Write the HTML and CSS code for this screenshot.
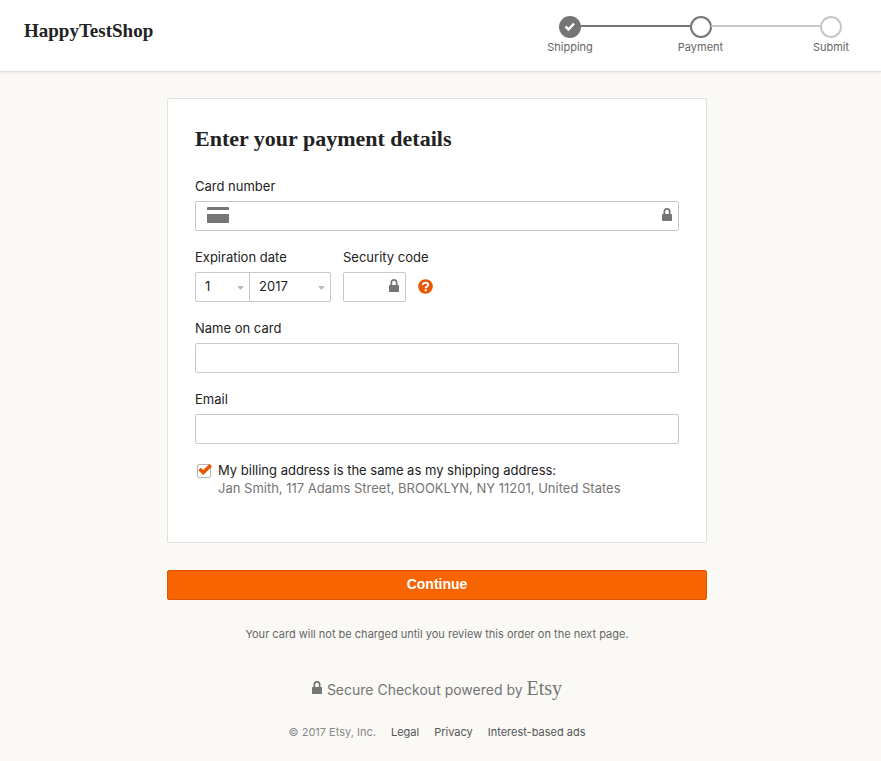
FILE: index.html
```html
<!DOCTYPE html>
<html lang="en">
    <head>
        <meta charset="utf-8">
        <meta name="viewport" content="width=device-width, initial-scale=1">
        <title>HappyTestShop - Payment</title>
        <link rel="stylesheet" href="styles.css">
    </head>
    <body>
        <svg class="symbols" width="0" height="0" aria-hidden="true">
            <symbol id="lock" viewBox="0 0 10 13">
                <path fill="currentColor" fill-rule="evenodd" d="M1.500 6V3.500a3.500 3.500 0 0 1 7 0V6h.8q.7 0 .7.7v5.6q0 .7-.7.7H.7Q0 13 0 12.300V6.700Q0 6 .7 6zM3.200 6h3.600V3.500a1.800 1.800 0 0 0-3.600 0z"/>
            </symbol>
        </svg>
        <header class="header">
            <div class="shop-name">HappyTestShop</div>
            <ol class="steps">
                <li class="step done">
                    <span class="dot"><svg width="12" height="10" viewBox="0 0 12 10"><path d="M1.500 4.500l3 3 5.500-6" fill="none" stroke="#fff" stroke-width="2.500"/></svg></span>
                    <span class="step-label">Shipping</span>
                </li>
                <li class="step current" aria-current="step">
                    <span class="dot"></span>
                    <span class="step-label">Payment</span>
                </li>
                <li class="step">
                    <span class="dot"></span>
                    <span class="step-label">Submit</span>
                </li>
            </ol>
        </header>
        <main class="content">
            <form>
                <section class="card">
                    <h1>Enter your payment details</h1>
                    <div class="field">
                        <label for="number">Card number</label>
                        <div class="input-wrap">
                            <svg class="card-icon" width="22" height="16" viewBox="0 0 22 16" aria-hidden="true"><path fill="currentColor" d="M0 3V1q0-1 1-1h20q1 0 1 1v2zM0 7h22v8q0 1-1 1H1q-1 0-1-1z"/></svg>
                            <input class="text number" id="number" type="text" inputmode="numeric">
                            <svg class="lock" width="10" height="13" aria-hidden="true"><use href="#lock"/></svg>
                        </div>
                    </div>
                    <div class="row">
                        <div class="field">
                            <label for="month">Expiration date</label>
                            <div class="selects">
                                <div class="select-wrap month">
                                    <select id="month"><option>1</option></select>
                                    <svg class="arrow" width="7" height="4" viewBox="0 0 7 4" aria-hidden="true"><path fill="#bbb" d="M0 0h7L3.500 4z"/></svg>
                                </div>
                                <div class="select-wrap year">
                                    <select id="year" aria-label="Expiration year"><option>2017</option></select>
                                    <svg class="arrow" width="7" height="4" viewBox="0 0 7 4" aria-hidden="true"><path fill="#bbb" d="M0 0h7L3.500 4z"/></svg>
                                </div>
                            </div>
                        </div>
                        <div class="field">
                            <label for="code">Security code</label>
                            <div class="code-row">
                                <div class="input-wrap code">
                                    <input class="text" id="code" type="text" inputmode="numeric">
                                    <svg class="lock" width="10" height="13" aria-hidden="true"><use href="#lock"/></svg>
                                </div>
                                <button class="help" type="button" aria-label="Help">
                                    <svg width="15" height="15" viewBox="0 0 15 15"><circle cx="7.500" cy="7.500" r="7.300" fill="#eb5600"/><path d="M4.900 6q0-2.300 2.600-2.300t2.600 2.200q0 1.100-1.300 1.700-1.100.5-1.100 1.600" fill="none" stroke="#fff" stroke-width="2"/><rect x="6.600" y="10.200" width="2.200" height="2" fill="#fff"/></svg>
                                </button>
                            </div>
                        </div>
                    </div>
                    <div class="field">
                        <label for="name">Name on card</label>
                        <input class="text" id="name" type="text">
                    </div>
                    <div class="field">
                        <label for="email">Email</label>
                        <input class="text" id="email" type="email">
                    </div>
                    <div class="billing">
                        <div class="check">
                            <input id="same" type="checkbox" checked>
                            <svg class="tick" width="14" height="12" viewBox="0 0 14 12" aria-hidden="true"><path d="M1.500 5l3.800 3.600L12.800 1.200" fill="none" stroke="#eb5600" stroke-width="3.600"/></svg>
                        </div>
                        <div>
                            <label for="same">My billing address is the same as my shipping address:</label>
                            <div class="address">Jan Smith, 117 Adams Street, BROOKLYN, NY 11201, United States</div>
                        </div>
                    </div>
                </section>
                <button class="continue" type="submit">Continue</button>
            </form>
            <p class="note">Your card will not be charged until you review this order on the next page.</p>
        </main>
        <footer class="footer">
            <div class="secure">
                <svg width="10" height="13" aria-hidden="true"><use href="#lock"/></svg>
                <span>Secure Checkout powered by <span class="etsy">Etsy</span></span>
            </div>
            <div class="links">
                <span>© 2017 Etsy, Inc.</span>
                <a href="#">Legal</a>
                <a href="#">Privacy</a>
                <a href="#">Interest-based ads</a>
            </div>
        </footer>
    </body>
</html>
```
FILE: styles.css
```css
* {box-sizing:border-box;}
body {margin:0;background:#faf9f5;color:#222;font:13px/18px Inter, "Liberation Sans", sans-serif;}
svg {display:block;}
.symbols {position:absolute;}

.header {display:flex;justify-content:space-between;height:72px;padding:16px 39px 0 24px;background:#fff;border-bottom:1px solid #ddddd9;box-shadow:0 1px 2px rgba(0,0,0,0.06);}
.shop-name {font:bold 19px/30px "Liberation Serif", serif;}
.steps {display:flex;justify-content:space-between;width:283px;margin:0;padding:0;list-style:none;}
.step {position:relative;display:flex;flex-direction:column;align-items:center;width:22px;}
.step + .step::before {content:"";position:absolute;top:9px;right:22px;width:109px;height:2px;background:#c8c8c8;}
.step.current::before {background:#757575 !important;}
.dot {display:flex;align-items:center;justify-content:center;flex:none;width:22px;height:22px;border:2px solid #c8c8c8;border-radius:50%;}
.done .dot {background:#757575;border-color:#757575;}
.current .dot {border-color:#757575;}
.step-label {color:#666;font-size:11px;white-space:nowrap;}

.content, .footer {padding:0 27px 0 20px;}
.content form {max-width:540px;margin:26px auto 0;}
.card {padding:26px 27px 45px;background:#fff;border:1px solid #e1e1dd;border-radius:2px;}
h1 {margin:0 0 24px;font:bold 22px/28px "Liberation Serif", serif;}
.field {display:flex;flex-direction:column;gap:6px;margin-bottom:17px;}
.row {display:flex;gap:12px;}
.text {display:block;width:100%;height:30px;padding:0 10px;background:#fff;border:1px solid #c8c8c8;border-radius:2px;font:inherit;color:#222;}
.number {padding:0 30px 0 42px;}
.input-wrap {position:relative;}
.code {width:63px;}
.code .text {padding-right:24px;}
.card-icon {position:absolute;top:6px;left:12px;color:#757575;}
.lock {position:absolute;top:7px;right:7px;color:#757575;}
.selects {display:flex;width:136px;height:30px;border:1px solid #c8c8c8;border-radius:2px;}
.select-wrap {position:relative;}
.month {width:54px;border-right:1px solid #c8c8c8;}
.year {flex:1;}
select {appearance:none;width:100%;height:28px;padding:0 20px 2px 9px;background:transparent;border:0;font:inherit;color:#222;}
.arrow {position:absolute;top:13px;right:5px;pointer-events:none;}
.code-row {display:flex;align-items:center;gap:12px;}
.help {padding:0 0 2px;background:none;border:0;cursor:pointer;}
.billing {display:flex;gap:7px;padding-left:2px;}
.check {position:relative;padding-top:3px;}
.check input {appearance:none;display:block;width:14px;height:14px;margin:0;background:#fff;border:1px solid #b4b4b4;border-radius:2px;}
.tick {display:none;position:absolute;top:3px;left:1px;pointer-events:none;}
.check input:checked + .tick {display:block;}
.address {color:#757575;}
.continue {display:block;width:100%;height:30px;margin-top:27px;padding:0 0 2px;background:#f76400;border:1px solid #e05600;border-radius:2px;color:#fff;font:bold 14px/26px "Liberation Sans", sans-serif;cursor:pointer;}
.note {margin:25px 0 0;color:#666;font-size:11px;text-align:center;}

.footer {padding-top:33px;padding-bottom:20px;}
.secure {display:flex;align-items:center;justify-content:center;gap:5px;color:#757575;font-size:14px;line-height:24px;}
.secure svg {margin-bottom:3px;}
.etsy {font:20px/24px "Liberation Serif", serif;}
.links {display:flex;justify-content:center;gap:15px;margin-top:21px;color:#888;font-size:11px;}
.links a {color:#555;text-decoration:none;}
```
